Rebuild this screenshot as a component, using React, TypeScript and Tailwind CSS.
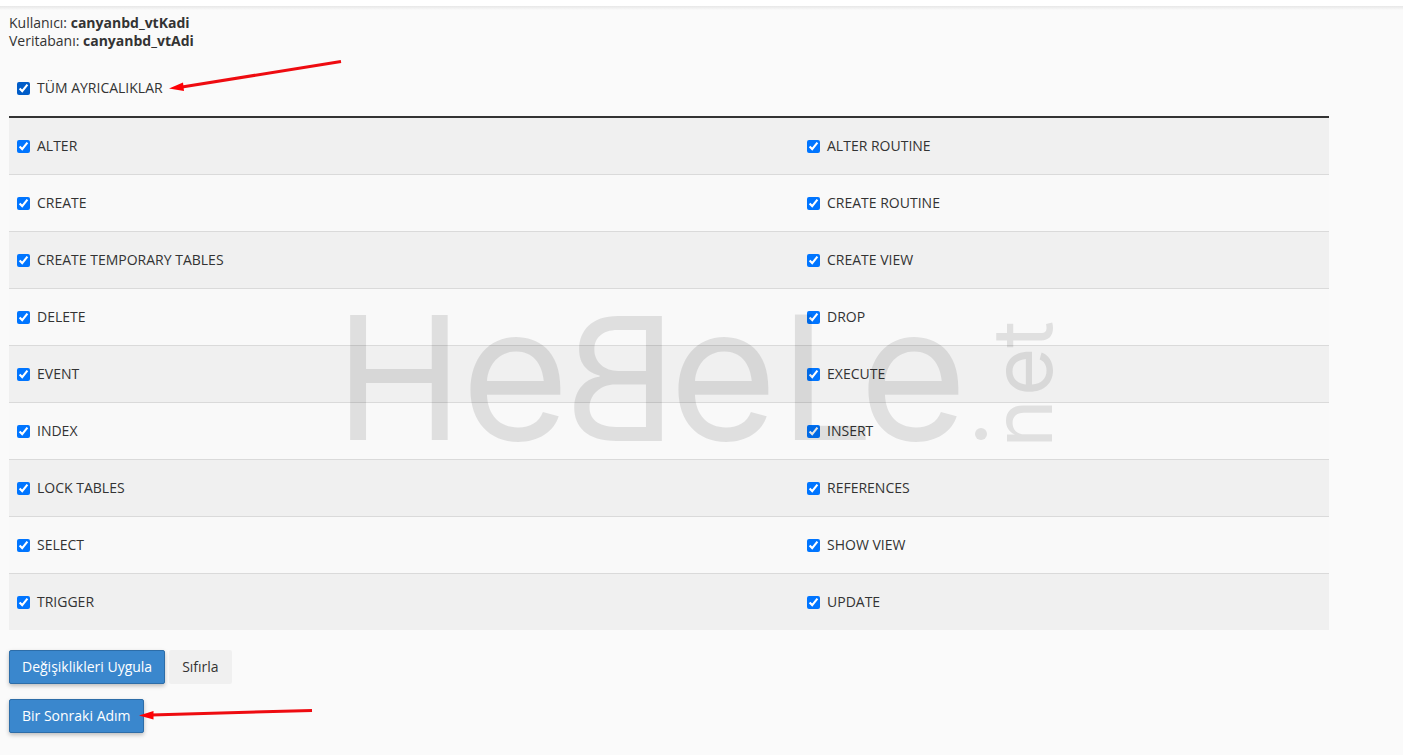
type Privilege = { id: string; label: string };

const rows: [Privilege, Privilege][] = [
  [{ id: 'alter', label: 'ALTER' }, { id: 'alter-routine', label: 'ALTER ROUTINE' }],
  [{ id: 'create', label: 'CREATE' }, { id: 'create-routine', label: 'CREATE ROUTINE' }],
  [{ id: 'create-temp', label: 'CREATE TEMPORARY TABLES' }, { id: 'create-view', label: 'CREATE VIEW' }],
  [{ id: 'delete', label: 'DELETE' }, { id: 'drop', label: 'DROP' }],
  [{ id: 'event', label: 'EVENT' }, { id: 'execute', label: 'EXECUTE' }],
  [{ id: 'index', label: 'INDEX' }, { id: 'insert', label: 'INSERT' }],
  [{ id: 'lock-tables', label: 'LOCK TABLES' }, { id: 'references', label: 'REFERENCES' }],
  [{ id: 'select', label: 'SELECT' }, { id: 'show-view', label: 'SHOW VIEW' }],
  [{ id: 'trigger', label: 'TRIGGER' }, { id: 'update', label: 'UPDATE' }],
];

function PrivilegeBox({ id, label, all = false }: Privilege & { all?: boolean }) {
  return (
    <div className="flex items-center gap-[7px]">
      <input
        id={id}
        type="checkbox"
        defaultChecked
        className={all ? 'size-[13px] accent-[#005cc8]' : 'size-[13px]'}
      />
      <label htmlFor={id}>{label}</label>
    </div>
  );
}

function Watermark() {
  return (
    <div className="pointer-events-none absolute inset-0 flex items-center justify-center">
      <svg
        width="704"
        height="130"
        viewBox="350 313 704 130"
        overflow="visible"
        className="opacity-10"
        fill="#000"
        fontFamily="Inter, sans-serif"
        fontSize="172"
        aria-hidden="true"
      >
        <text x="335" y="440">H</text>
        <text x="461" y="440" fontSize="186">e</text>
        <text transform="translate(677 441) scale(-1 1)" x="0" y="0">B</text>
        <text x="669" y="440" fontSize="186">e</text>
        <text x="779" y="440" fontFamily="Lato, sans-serif" fontSize="174">L</text>
        <text x="859" y="440" fontSize="186">e</text>
        <circle cx="981" cy="434" r="6" />
        <g transform="translate(1052 448) rotate(-90)" fontSize="83">
          <text x="0" y="0">n</text>
          <text x="52" y="0">e</text>
          <text x="100" y="0">t</text>
        </g>
      </svg>
    </div>
  );
}

function PointerArrows() {
  return (
    <>
      <svg className="pointer-events-none absolute left-[168px] top-[58px]" width="176" height="36" aria-hidden="true">
        <path d="M14 29 L173 3.5" stroke="#ee0b10" strokeWidth="3" strokeLinecap="butt" />
        <path d="M1 30.5 L15 24.5 L16 33 Z" fill="#ff0005" />
      </svg>
      <svg className="pointer-events-none absolute left-[138px] top-[706px]" width="176" height="16" aria-hidden="true">
        <path d="M13 9 L174 4.5" stroke="#ee0b10" strokeWidth="3" strokeLinecap="butt" />
        <path d="M1 9.5 L15.5 5 L15.5 13.5 Z" fill="#ff0005" />
      </svg>
    </>
  );
}

const primary =
  'h-[34px] rounded-xs border border-[#2d6da8] bg-[#3a87cd] px-3 text-white shadow-[0_2px_4px_rgba(0,0,0,0.25)]';

export default function App() {
  return (
    <div className="relative min-h-screen bg-[#fafafa] font-['Open_Sans','Noto_Sans',sans-serif] text-sm text-[#333]">
      <div className="h-1.5 bg-white" />
      <div className="h-1 bg-linear-to-b from-[#e7e7e7] to-[#fafafa]" />
      <main className="pl-[9px] pr-[74px] pt-1">
        <div className="leading-[18px]">
          <p>Kullanıcı: <strong>canyanbd_vtKadi</strong></p>
          <p>Veritabanı: <strong>canyanbd_vtAdi</strong></p>
        </div>
        <form className="mt-2.5" onSubmit={(e) => e.preventDefault()}>
          <table className="w-full table-fixed border-separate border-spacing-0">
            <colgroup>
              <col className="w-[59.85%]" />
              <col />
            </colgroup>
            <thead>
              <tr>
                <th colSpan={2} className="h-[58px] border-b-2 border-[#333] px-2 py-0 text-left font-normal">
                  <PrivilegeBox id="all" label="TÜM AYRICALIKLAR" all />
                </th>
              </tr>
            </thead>
            <tbody>
              {rows.map(([left, right]) => (
                <tr key={left.id} className="group odd:bg-[#f0f0f0] even:bg-[#f9f9f9]">
                  {[left, right].map((p) => (
                    <td key={p.id} className="h-[57px] border-b border-[#dadada] px-2 py-0 group-last:h-14 group-last:border-b-0">
                      <PrivilegeBox {...p} />
                    </td>
                  ))}
                </tr>
              ))}
            </tbody>
          </table>
          <div className="mt-5 flex gap-1">
            <button type="submit" className={primary}>Değişiklikleri Uygula</button>
            <button type="reset" className="h-[34px] rounded-xs bg-[#f0f0f0] px-[13px]">Sıfırla</button>
          </div>
          <div className="mt-[15px] pb-5">
            <button type="button" className={primary}>Bir Sonraki Adım</button>
          </div>
        </form>
      </main>
      <Watermark />
      <PointerArrows />
    </div>
  );
}
